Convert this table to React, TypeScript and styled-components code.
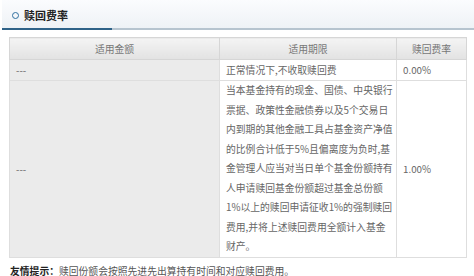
import React from "react";
import styled, { createGlobalStyle } from "styled-components";

const Global = createGlobalStyle`
  html, body { margin: 0; padding: 0; background: #fff; }
  body { font-family: "Noto Sans CJK SC", "Noto Sans", sans-serif; }
`;

const Page = styled.div`
  width: 474px;
  height: 276px;
  overflow: hidden;
  background: #fff;
`;

const TitleBar = styled.div`
  height: 28px;
  margin-left: 2px;
  display: flex;
  align-items: stretch;
  background: linear-gradient(#fbfcfe, #eef2f6);
  border-bottom: 2px solid #b6c4cf;
`;

const TitleTab = styled.div`
  width: 110px;
  display: flex;
  align-items: center;
  gap: 5px;
  padding-left: 10px;
  box-sizing: border-box;
  border-bottom: 2px solid #2e6288;
  margin-bottom: -2px;
`;

const Ring = styled.span`
  width: 5px;
  height: 5px;
  border: 1.5px solid #2f6f9f;
  border-radius: 50%;
  margin-top: 2px;
`;

const Title = styled.span`
  font-size: 11px;
  font-weight: bold;
  color: #222;
  margin-top: 2px;
`;

const Table = styled.table`
  margin: 7px 0 0 9px;
  width: 454px;
  border-collapse: collapse;
  table-layout: fixed;
  font-size: 9.8px;
  line-height: 14px;
  color: #666;
  border: 1px solid #dcdcdc;
`;

const Th = styled.th<{ $w: number }>`
  width: ${(p) => p.$w}px;
  height: 21px;
  padding: 0;
  font-weight: normal;
  text-align: center;
  color: #777;
  background: linear-gradient(#f4f4f4, #e2e2e2);
  border: 1px solid #d6d6d6;
`;

const Td = styled.td<{ $tone?: "gray" | "white" }>`
  height: 20px;
  padding: 0 6px;
  vertical-align: middle;
  background: ${(p) => (p.$tone === "gray" ? "#ebebeb" : "#fff")};
  border: 1px solid #dedede;
`;

const LongCell = styled(Td)`
  padding: 0 4px 0 6px;
  line-height: 19.5px;
`;

const Line = styled.span`
  display: block;
  white-space: nowrap;
`;

const Footer = styled.div`
  margin: 7px 0 0 10px;
  font-size: 9.8px;
  line-height: 12px;
  color: #555;
`;

const Strong = styled.span`
  font-weight: bold;
  color: #222;
`;

const longLines = [
  "当本基金持有的现金、国债、中央银行",
  "票据、政策性金融债券以及5个交易日",
  "内到期的其他金融工具占基金资产净值",
  "的比例合计低于5%且偏离度为负时,基",
  "金管理人应当对当日单个基金份额持有",
  "人申请赎回基金份额超过基金总份额",
  "1%以上的赎回申请征收1%的强制赎回",
  "费用,并将上述赎回费用全额计入基金",
  "财产。",
];

export default function App() {
  return (
    <Page>
      <Global />
      <TitleBar>
        <TitleTab>
          <Ring />
          <Title>赎回费率</Title>
        </TitleTab>
      </TitleBar>
      <Table>
        <thead>
          <tr>
            <Th $w={209}>适用金额</Th>
            <Th $w={176}>适用期限</Th>
            <Th $w={69}>赎回费率</Th>
          </tr>
        </thead>
        <tbody>
          <tr>
            <Td $tone="gray">---</Td>
            <Td>正常情况下,不收取赎回费</Td>
            <Td>0.00%</Td>
          </tr>
          <tr>
            <Td $tone="gray">---</Td>
            <LongCell>
              {longLines.map((l) => (
                <Line key={l}>{l}</Line>
              ))}
            </LongCell>
            <Td>1.00%</Td>
          </tr>
        </tbody>
      </Table>
      <Footer>
        <Strong>友情提示：</Strong>赎回份额会按照先进先出算持有时间和对应赎回费用。
      </Footer>
    </Page>
  );
}
